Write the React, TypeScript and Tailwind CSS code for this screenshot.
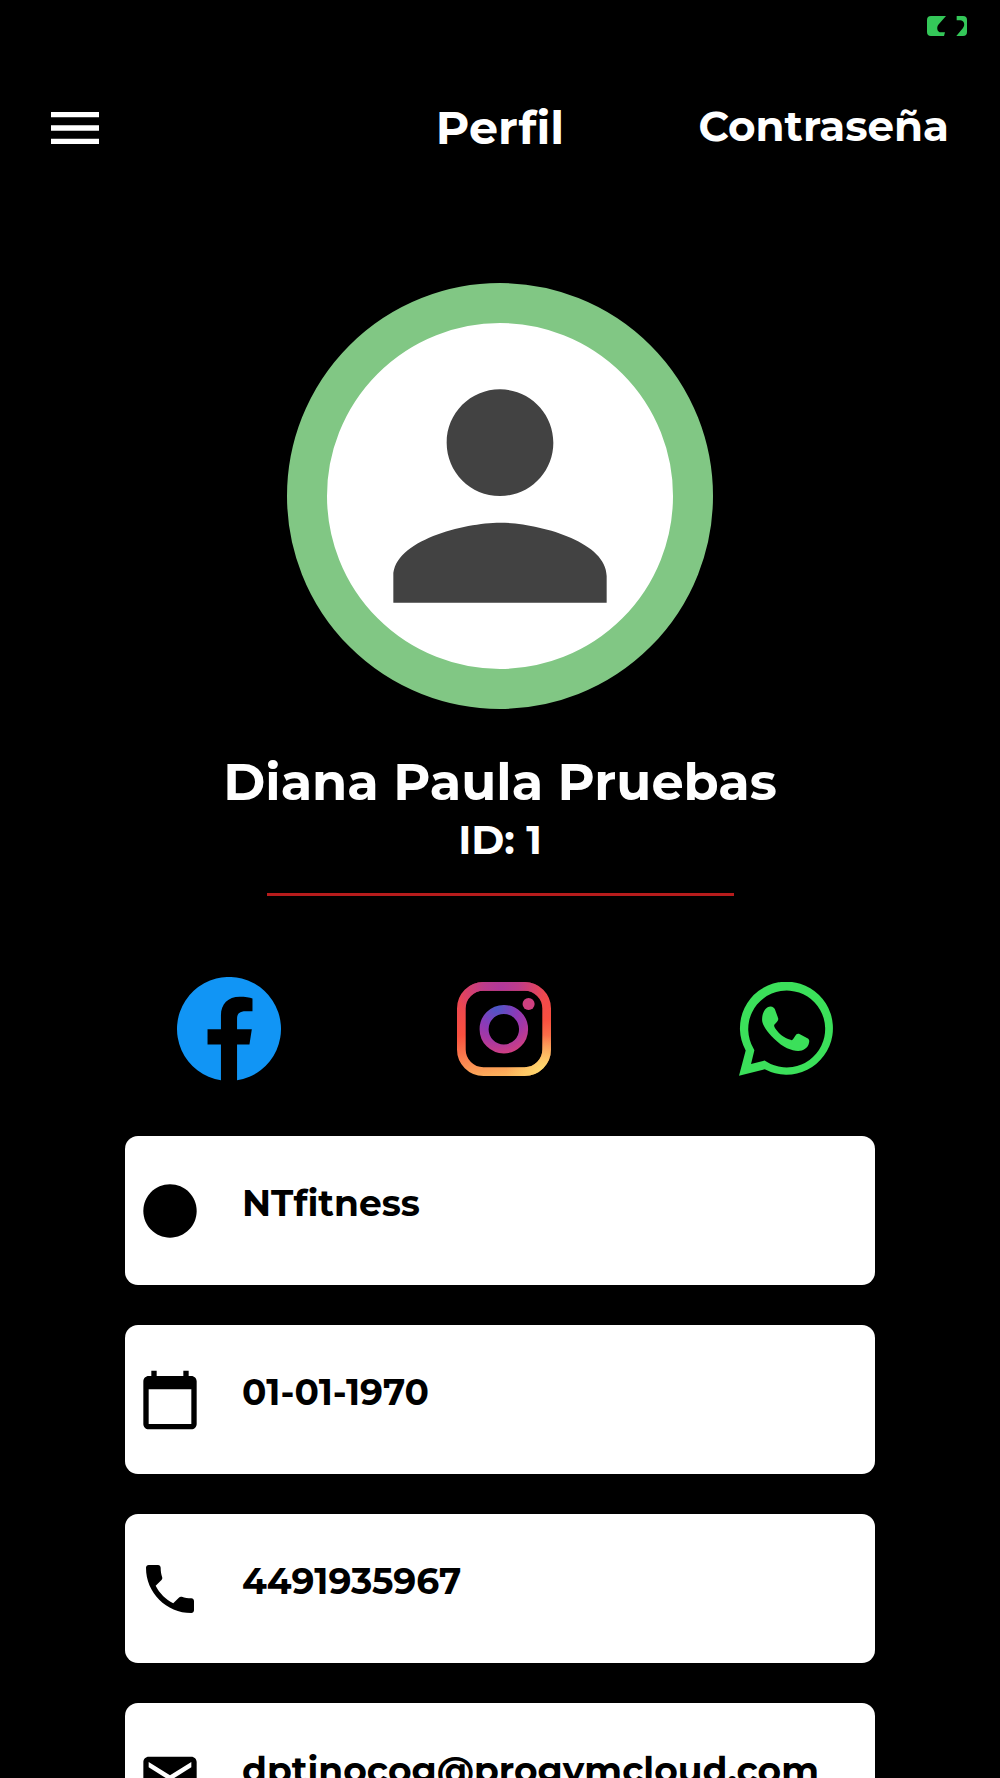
import type { IconType } from "react-icons";
import {
  MdCalendarToday,
  MdEmail,
  MdLens,
  MdLocalPhone,
  MdPerson,
} from "react-icons/md";

const details: { label: string; value: string; Icon: IconType }[] = [
  { label: "Gimnasio", value: "NTfitness", Icon: MdLens },
  { label: "Nacimiento", value: "01-01-1970", Icon: MdCalendarToday },
  { label: "Teléfono", value: "4491935967", Icon: MdLocalPhone },
  { label: "Correo", value: "dptinocog@progymcloud.com", Icon: MdEmail },
];

function BatteryIcon() {
  return (
    <svg viewBox="80 48 120 60" className="h-5 w-10 fill-[#34c759]">
      <path d="M92 48H137L114 74C108 82 110 97 122 97H134L131 108H92Q80 108 80 96V60Q80 48 92 48Z" />
      <path d="M169 48H188Q200 48 200 60V96Q200 108 188 108H168L188 84C196 73 190 61 180 61H169Z" />
    </svg>
  );
}

function MenuIcon() {
  return (
    <svg viewBox="0 0 18 12" className="h-8 w-12 fill-white">
      <path d="M0 0h18v2H0zM0 5h18v2H0zM0 10h18v2H0z" />
    </svg>
  );
}

function FacebookIcon() {
  return (
    <svg viewBox="51 51 310 310" className="size-[104px] fill-[#1195f5]">
      <path d="M230 359V252h37l7-45h-44v-31c0-16 7-23 26-23h20v-38c-8-3-22-5-38-5-35 0-56 22-56 55v42h-40v45h40v107A155 155 0 1 1 230 359Z" />
    </svg>
  );
}

function InstagramIcon() {
  return (
    <svg viewBox="53 66 281 281" className="size-[94px]" fill="none">
      <defs>
        <linearGradient id="ig-frame" x1="150" y1="66" x2="200" y2="347" gradientUnits="userSpaceOnUse">
          <stop offset="0" stopColor="#e5425a" />
          <stop offset="0.5" stopColor="#f9503f" />
          <stop offset="0.8" stopColor="#fb8a52" />
          <stop offset="1" stopColor="#fdb45c" />
        </linearGradient>
        <radialGradient id="ig-corner" cx="310" cy="335" r="110" gradientUnits="userSpaceOnUse">
          <stop offset="0" stopColor="#ffdb70" />
          <stop offset="1" stopColor="#ffdb70" stopOpacity="0" />
        </radialGradient>
        <radialGradient id="ig-top" cx="185" cy="85" r="130" gradientUnits="userSpaceOnUse">
          <stop offset="0" stopColor="#b0389c" />
          <stop offset="0.4" stopColor="#bd3c8b" />
          <stop offset="1" stopColor="#bd3c8b" stopOpacity="0" />
        </radialGradient>
        <radialGradient id="ig-lens" cx="172" cy="142" r="150" gradientUnits="userSpaceOnUse">
          <stop offset="0" stopColor="#4a58c8" />
          <stop offset="0.4" stopColor="#8a3ab8" />
          <stop offset="0.65" stopColor="#a637a4" />
          <stop offset="1" stopColor="#d9417a" />
        </radialGradient>
      </defs>
      <rect x="66" y="79" width="255" height="255" rx="66" stroke="url(#ig-frame)" strokeWidth="26" />
      <rect x="66" y="79" width="255" height="255" rx="66" stroke="url(#ig-corner)" strokeWidth="26" />
      <rect x="66" y="79" width="255" height="255" rx="66" stroke="url(#ig-top)" strokeWidth="26" />
      <circle cx="193" cy="207" r="59" stroke="url(#ig-lens)" strokeWidth="27" />
      <circle cx="267" cy="132" r="18" fill="#cf4080" />
    </svg>
  );
}

function WhatsappIcon() {
  return (
    <svg viewBox="58 67 281 281" className="size-[94px] fill-[#3be05a]">
      <path
        fillRule="evenodd"
        d="M58 347L78 272A139 139 0 1 1 135 328ZM94 312L135 302L138 304A115 115 0 1 0 101 265L104 271Z"
      />
      <path d="M127 180C127 155 140 140 152 140C160 141 163 144 165 148L175 175C177 180 172 186 164 194C162 198 163 200 166 205C178 222 192 234 212 240C216 242 218 240 221 236L229 224C232 221 236 221 240 223L264 236C268 239 269 243 267 250C264 264 250 273 235 273C215 273 190 264 163 237C143 217 127 196 127 180Z" />
    </svg>
  );
}

export default function App() {
  return (
    <div className="h-screen overflow-hidden bg-black font-['Montserrat','Inter',sans-serif] font-bold text-white">
      <div className="flex justify-end px-[33px] pt-4">
        <BatteryIcon />
      </div>

      <header className="grid grid-cols-[1fr_auto_1fr] items-center px-[51px] pt-[60px]">
        <button type="button" aria-label="Menú" className="justify-self-start">
          <MenuIcon />
        </button>
        <h1 className="text-[46px] leading-[64px]">Perfil</h1>
        <a href="#contrasena" className="justify-self-end pb-1 text-[42px] leading-[60px]">
          Contraseña
        </a>
      </header>

      <main className="flex flex-col">
        <section className="flex flex-col items-center pt-[123px]">
          <div className="flex size-[426px] items-center justify-center rounded-full border-40 border-[#81c784] bg-white">
            <MdPerson className="size-80 shrink-0 text-[#424242]" />
          </div>
          <h2 className="mt-10 text-[51px] leading-[66px]">Diana Paula Pruebas</h2>
          <p className="text-[40px] leading-[50px]">ID: 1</p>
          <hr className="mt-7 w-[467px] border-0 border-t-3 border-[#b71c1c]" />
        </section>

        <nav
          aria-label="Redes sociales"
          className="mt-[81px] grid grid-cols-[275fr_275fr_290fr] place-items-center pr-[69px] pl-[91px]"
        >
          <a href="#facebook" aria-label="Facebook">
            <FacebookIcon />
          </a>
          <a href="#instagram" aria-label="Instagram">
            <InstagramIcon />
          </a>
          <a href="#whatsapp" aria-label="WhatsApp">
            <WhatsappIcon />
          </a>
        </nav>

        <ul className="mt-[55px] flex flex-col gap-10 px-[125px] text-black">
          {details.map(({ label, value, Icon }) => (
            <li
              key={label}
              aria-label={label}
              className="flex items-center gap-10 rounded-[13px] bg-white px-[13px] pt-[43px] pb-[42px]"
            >
              <Icon className="size-16 shrink-0" />
              <span className="pb-4 text-[36px] leading-[48px]">{value}</span>
            </li>
          ))}
        </ul>
      </main>
    </div>
  );
}
